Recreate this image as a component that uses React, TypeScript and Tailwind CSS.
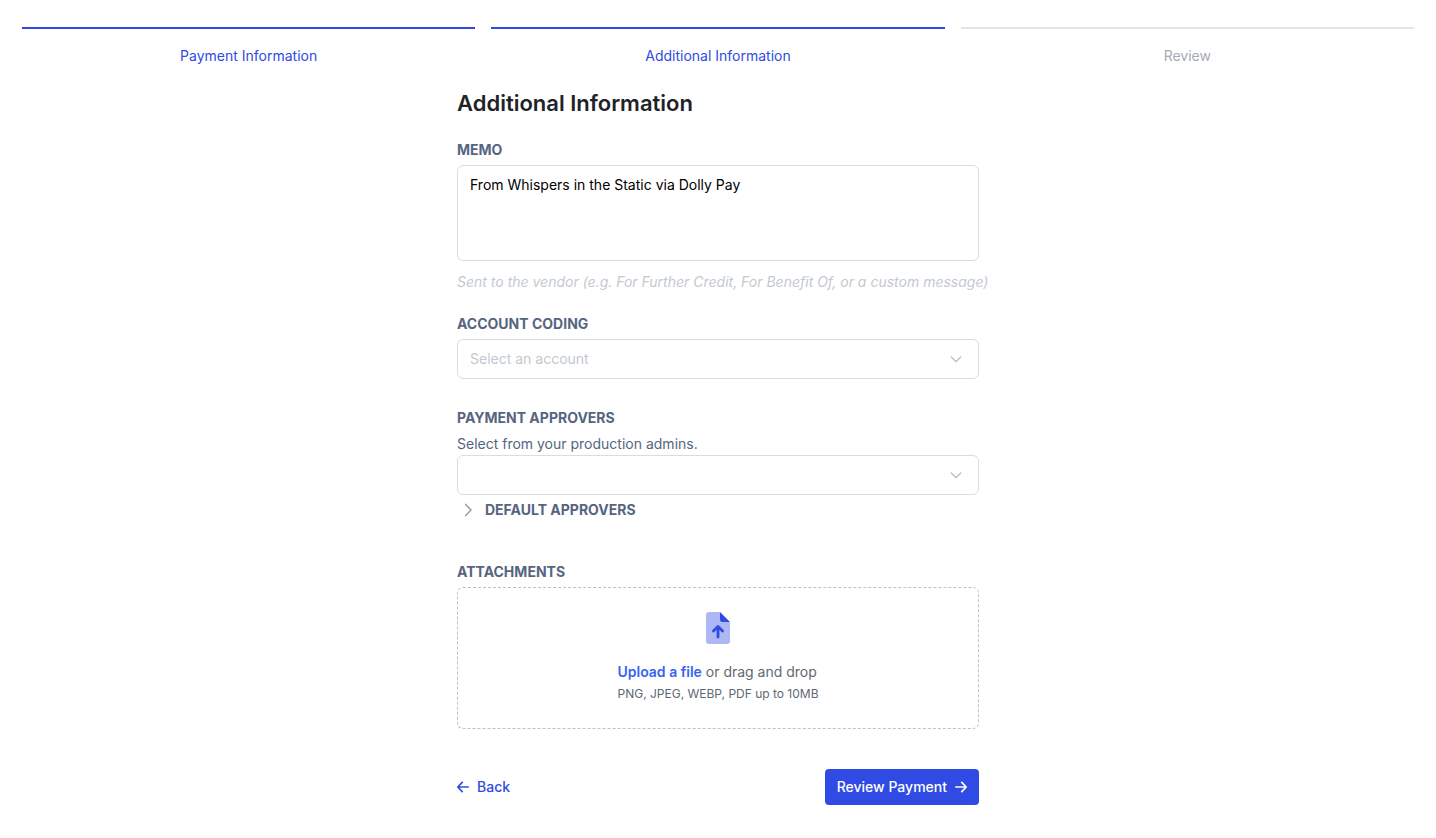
import React, { useState } from 'react';
import clsx from 'clsx';

const steps = [
  { name: 'Payment Information', active: true },
  { name: 'Additional Information', active: true },
  { name: 'Review', active: false },
];

const labelClass = 'text-sm leading-5 font-bold uppercase text-[#56657f]';

function ArrowIcon({ className }: { className?: string }) {
  return (
    <svg className={clsx('h-3 w-3', className)} viewBox="0 0 12 12" fill="none" stroke="currentColor" strokeWidth="1.7" strokeLinecap="round" strokeLinejoin="round" aria-hidden="true">
      <path d="M0.8 6H11.2M6.8 1.4L11.2 6L6.8 10.6" />
    </svg>
  );
}

function Chevron({ className }: { className?: string }) {
  return (
    <svg className={className} viewBox="0 0 12 12" fill="none" stroke="currentColor" strokeWidth="1.3" strokeLinecap="round" strokeLinejoin="round" aria-hidden="true">
      <path d="M1.2 4L6 8.6L10.8 4" />
    </svg>
  );
}

function UploadIcon() {
  return (
    <svg className="h-8 w-6" viewBox="0 0 24 32" aria-hidden="true">
      <path d="M3 0H14V8C14 9.1 14.9 10 16 10H24V29A3 3 0 0 1 21 32H3A3 3 0 0 1 0 29V3A3 3 0 0 1 3 0Z" fill="#acb7f4" />
      <path d="M14 0L24 10H16A2 2 0 0 1 14 8Z" fill="#2f4be3" />
      <path d="M12 25V15M7.4 18.9L12 14.4L16.6 18.9" fill="none" stroke="#2f4be3" strokeWidth="2.8" strokeLinecap="round" strokeLinejoin="round" />
    </svg>
  );
}

type SelectFieldProps = {
  id: string;
  placeholder: string;
  value: string;
  onChange: (value: string) => void;
};

function SelectField({ id, placeholder, value, onChange }: SelectFieldProps) {
  return (
    <div className="relative">
      <select
        id={id}
        value={value}
        onChange={(e) => onChange(e.target.value)}
        className="block h-10 w-full appearance-none rounded-md border border-[#d9dce1] bg-white px-3 text-sm text-[#c3c9d1]"
      >
        <option value="">{placeholder}</option>
      </select>
      <Chevron className="pointer-events-none absolute top-3.5 right-[17px] h-3 w-3 text-[#b6b9be]" />
    </div>
  );
}

function App() {
  const [memo, setMemo] = useState('From Whispers in the Static via Dolly Pay');
  const [account, setAccount] = useState('');
  const [approver, setApprover] = useState('');

  return (
    <div className="min-h-screen bg-white pt-[27px] pb-8 font-['Inter',sans-serif]">
      <nav aria-label="Progress" className="px-[22px]">
        <ol className="grid grid-cols-3 gap-4">
          {steps.map((step) => (
            <li
              key={step.name}
              className={clsx(
                'border-t-2 pt-[17px] text-center text-sm leading-5',
                step.active ? 'border-[#2f4be3] text-[#2f4be3]' : 'border-[#e2e6ea] text-[#a3abb6]'
              )}
            >
              {step.name}
            </li>
          ))}
        </ol>
      </nav>

      <form onSubmit={(e) => e.preventDefault()} className="mx-auto mt-[21px] w-full max-w-[522px]">
        <h1 className="text-[22px] leading-8 font-semibold text-[#1f2328]">Additional Information</h1>

        <div className="mt-[21px]">
          <label htmlFor="memo" className={clsx(labelClass, 'block')}>Memo</label>
          <textarea
            id="memo"
            value={memo}
            onChange={(e) => setMemo(e.target.value)}
            className="mt-[5px] block h-24 w-full resize-none rounded-md border border-[#d9dce1] px-3 py-[9px] text-sm leading-5 text-black"
          />
          <p className="mt-[11px] text-sm leading-5 text-[#c3c9d1] italic sm:whitespace-nowrap">
            Sent to the vendor (e.g. For Further Credit, For Benefit Of, or a custom message)
          </p>
        </div>

        <div className="mt-[22px] flex flex-col gap-[5px]">
          <label htmlFor="account" className={labelClass}>Account coding</label>
          <SelectField id="account" placeholder="Select an account" value={account} onChange={setAccount} />
        </div>

        <div className="mt-[29px]">
          <label htmlFor="approvers" className={clsx(labelClass, 'block')}>Payment approvers</label>
          <p className="mt-1.5 mb-px text-sm leading-5 text-[#56657f]">Select from your production admins.</p>
          <SelectField id="approvers" placeholder="" value={approver} onChange={setApprover} />
          <button type="button" className="mt-[5px] flex items-center gap-2.5 pl-1">
            <Chevron className="h-3.5 w-3.5 -rotate-90 text-[#9a9da2]" />
            <span className={labelClass}>Default approvers</span>
          </button>
        </div>

        <div className="mt-[42px]">
          <h2 className={labelClass}>Attachments</h2>
          <div className="mt-[5px] flex flex-col items-center rounded-md border border-dashed border-[#bfc1c4] pt-6 pb-[26px]">
            <UploadIcon />
            <div className="mt-[18px] text-[#606872]">
              <p className="text-sm leading-5">
                <label htmlFor="attachments" className="cursor-pointer font-semibold text-[#3565f0]">Upload a file</label>
                <input id="attachments" type="file" accept=".png,.jpeg,.webp,.pdf" multiple className="sr-only" />
                {' '}or drag and drop
              </p>
              <p className="mt-1 text-xs leading-4">PNG, JPEG, WEBP, PDF up to 10MB</p>
            </div>
          </div>
        </div>

        <div className="mt-10 flex items-center justify-between">
          <button type="button" className="flex items-center gap-2 text-sm leading-5 font-medium text-[#2f4be3]">
            <ArrowIcon className="rotate-180" />
            Back
          </button>
          <button type="submit" className="flex h-9 items-center gap-2 rounded bg-[#2f4be3] px-3 text-sm font-medium text-white">
            Review Payment
            <ArrowIcon />
          </button>
        </div>
      </form>
    </div>
  );
}

export default App;
